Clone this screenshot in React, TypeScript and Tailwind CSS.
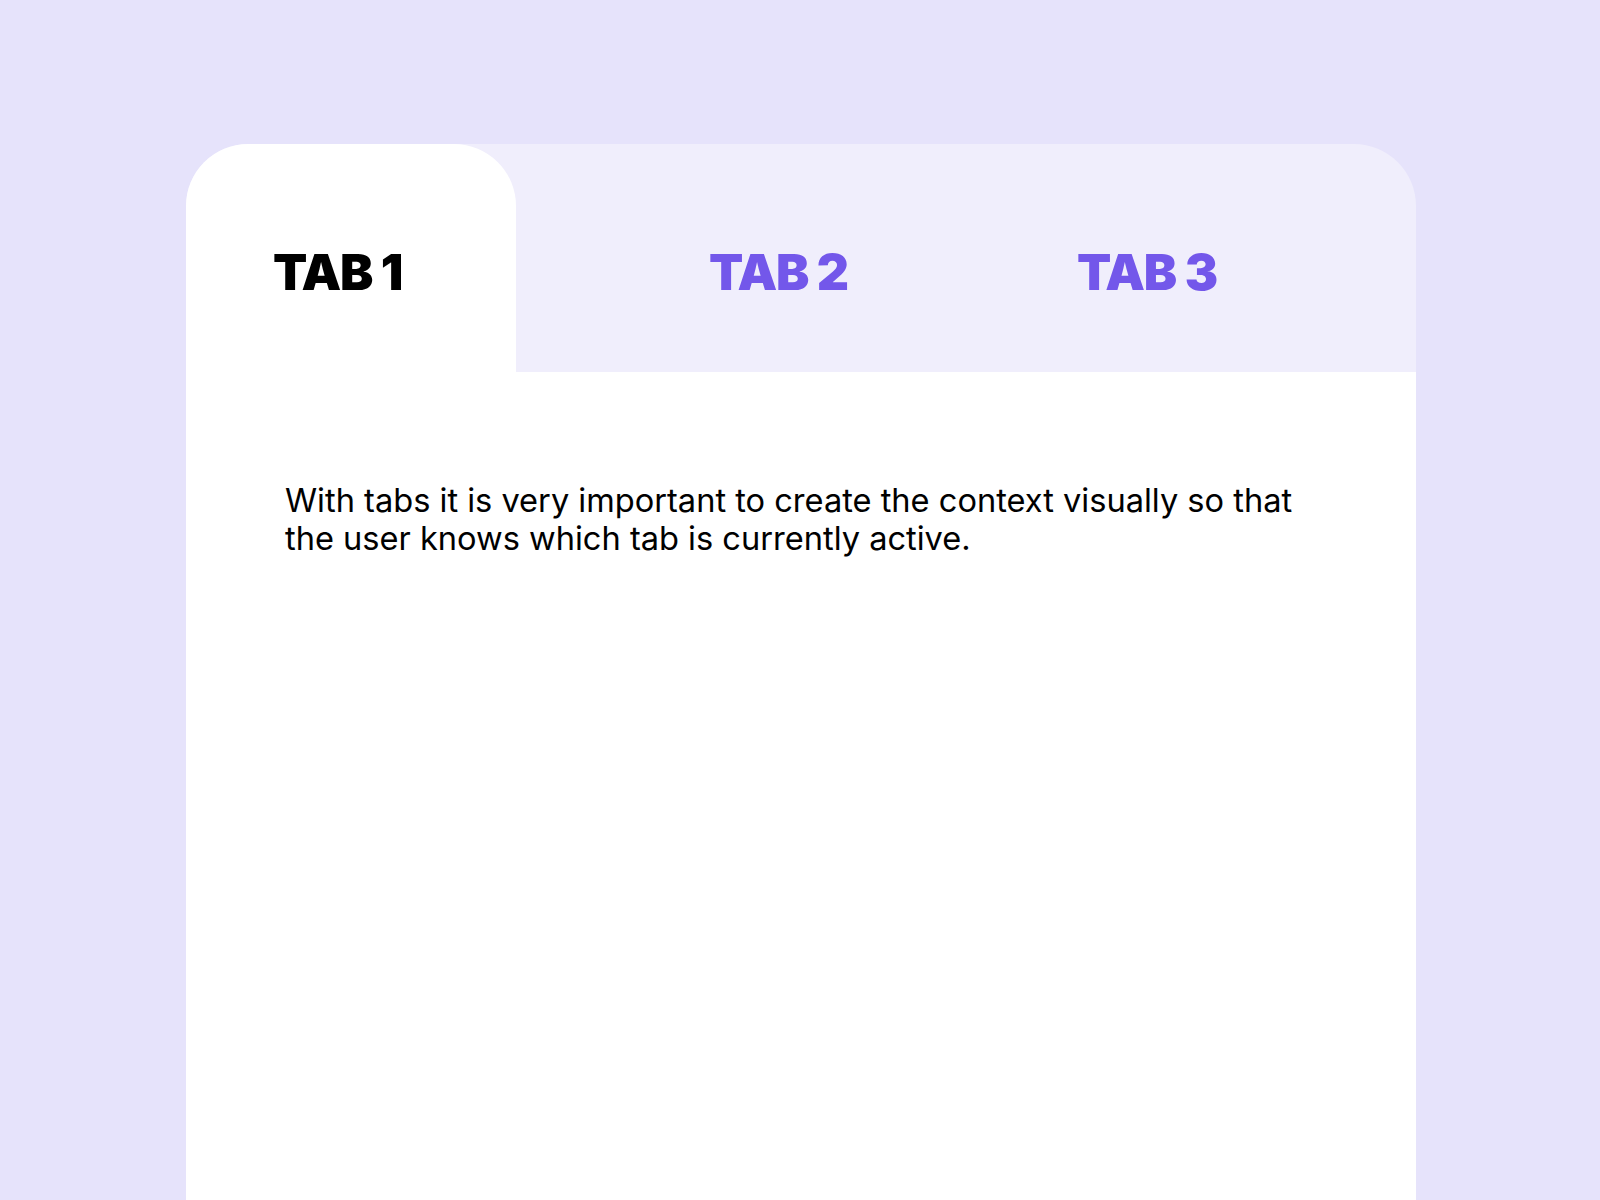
import React from 'react';

const tabs = ['TAB 1', 'TAB 2', 'TAB 3'];

export default function App() {
  return (
    <div className="h-[1200px] w-[1600px] overflow-hidden bg-[#e6e3fb] pt-[144px] pl-[186px] font-['Inter',sans-serif]">
      <div className="flex h-[1056px] w-[1230px] flex-col">
        {/* tab bar */}
        <div className="flex h-[228px] rounded-t-[62px] bg-[#f0eefc]">
          <div className="flex w-[330px] items-start rounded-t-[62px] bg-white pl-[87px] pt-[103px]">
            <span className="text-[50px] font-black leading-none tracking-[-0.025em] text-black">{tabs[0]}</span>
          </div>
          <div className="flex items-start pl-[193px] pt-[103px]">
            <span className="text-[50px] font-black leading-none tracking-[-0.025em] text-[#7357ea]">{tabs[1]}</span>
          </div>
          <div className="flex items-start pl-[229px] pt-[103px]">
            <span className="text-[50px] font-black leading-none tracking-[-0.025em] text-[#7357ea]">{tabs[2]}</span>
          </div>
        </div>

        {/* content */}
        <div className="flex-1 bg-white px-[99px] pt-[109px]">
          <p className="max-w-[1050px] text-[32.6px] leading-[38px] text-black">
            With tabs it is very important to create the context visually so that the user knows which tab is currently active.
          </p>
        </div>
      </div>
    </div>
  );
}
